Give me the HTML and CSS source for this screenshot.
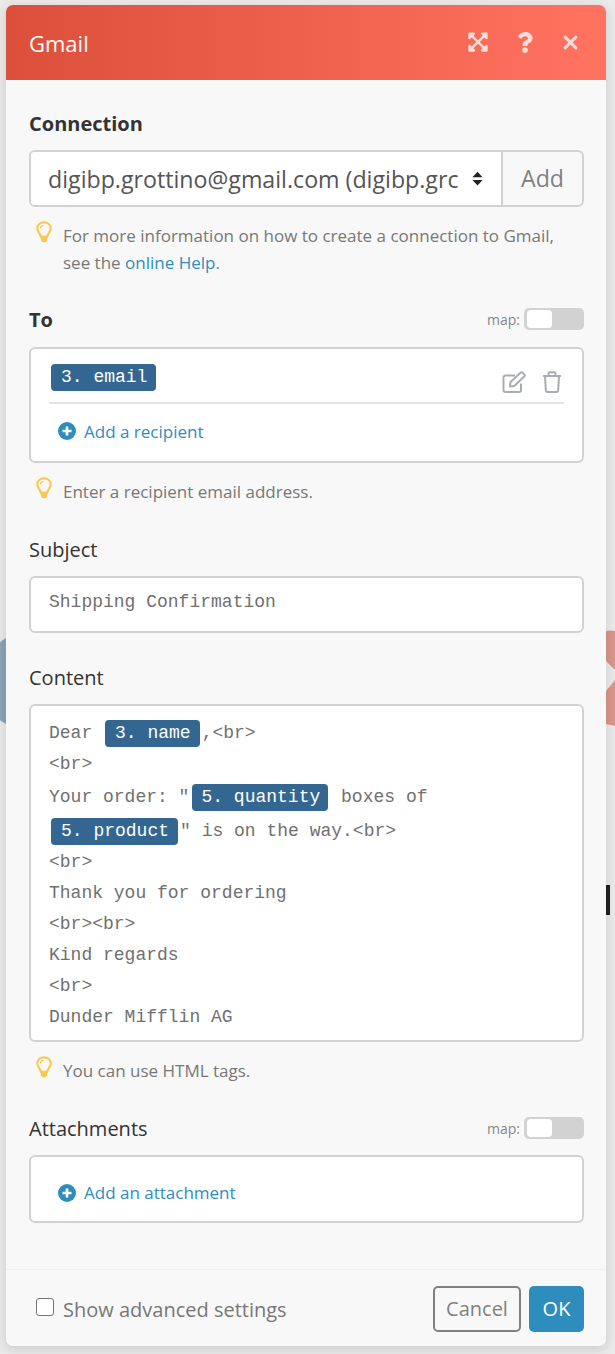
FILE: index.html
```html
<!DOCTYPE html>
<html lang="en">
<head>
    <meta charset="UTF-8">
    <meta name="viewport" content="width=device-width, initial-scale=1.0">
    <title>Gmail</title>
    <link rel="stylesheet" href="styles.css">
</head>
<body>
    <svg class="bg-shape bg-left" viewBox="0 0 6 90"><path d="M0 4 L6 0 V88 L0 84 Z"/></svg>
    <svg class="bg-shape bg-right" viewBox="0 0 9 96"><path d="M0 1 Q5 0 9 1 V40 L0 31 V61 L9 50 V96 Q5 95 0 94 Z"/></svg>
    <div class="bg-bar"></div>

    <div class="modal">
        <div class="modal-header">
            <span class="modal-title">Gmail</span>
            <div class="header-icons">
                <svg class="icon-expand" viewBox="0 0 448 512"><path d="M448.1 344v112c0 13.3-10.7 24-24 24h-112c-21.4 0-32.1-25.9-17-41l36.2-36.2L224 295.6 116.8 402.9 153 439c15.1 15.1 4.4 41-17 41H24c-13.3 0-24-10.7-24-24V344c0-21.4 25.9-32.1 41-17l36.2 36.2L184.5 256 77.2 148.7 41 185c-15.1 15.1-41 4.4-41-17V56c0-13.3 10.7-24 24-24h112c21.4 0 32.1 25.9 17 41l-36.2 36.2L224 216.4l107.3-107.3L295.1 73c-15.1-15.1-4.4-41 17-41h112c13.3 0 24 10.7 24 24v112c0 21.4-25.9 32.1-41 17l-36.2-36.2L263.6 256l107.3 107.3 36.2-36.2c15.1-15.2 41-4.5 41 16.9z"/></svg>
                <svg class="icon-question" viewBox="0 0 384 512"><path d="M202.021 0C122.202 0 70.503 32.703 29.914 91.026c-7.363 10.58-5.093 25.086 5.178 32.874l43.138 32.709c10.373 7.865 25.132 6.026 33.253-4.148 25.049-31.381 43.63-49.449 82.757-49.449 30.764 0 68.816 19.799 68.816 49.631 0 22.552-18.617 34.134-48.993 51.164-35.423 19.86-82.299 44.576-82.299 106.405V320c0 13.255 10.745 24 24 24h72.471c13.255 0 24-10.745 24-24v-5.773c0-42.86 125.268-44.645 125.268-160.627C377.504 66.256 286.902 0 202.021 0zM192 373.459c-38.196 0-69.271 31.075-69.271 69.271 0 38.195 31.075 69.27 69.271 69.27s69.271-31.075 69.271-69.271-31.075-69.27-69.271-69.27z"/></svg>
                <svg class="icon-close" viewBox="0 0 14 14"><path d="M2 2 L12 12 M12 2 L2 12"/></svg>
            </div>
        </div>

        <div class="modal-body">
            <div class="field field-connection">
                <div class="field-label bold">Connection</div>
                <div class="select-group">
                    <div class="select-box">
                        <span class="select-text">digibp.grottino@gmail.com (digibp.grc</span>
                        <svg class="icon-sort" viewBox="0 0 12 16"><path d="M6 0.5 L11.5 6.5 H0.5 Z M0.5 9.5 H11.5 L6 15.5 Z"/></svg>
                    </div>
                    <div class="select-add">Add</div>
                </div>
                <div class="hint">
                    <svg class="icon-bulb" viewBox="0 0 18 24"><path class="bulb-glass" d="M5.5 17.5 C5 13.5 1.5 12 1.5 8 C1.5 4 4.8 1.2 9 1.2 C13.2 1.2 16.5 4 16.5 8 C16.5 12 13 13.5 12.5 17.5 Z"/><path class="bulb-shine" d="M5 8 C5 6 6.5 4.6 8.5 4.4"/><path class="bulb-base" d="M5.6 18.6 H12.4 V20.6 C12.4 22.4 10.8 23.6 9 23.6 C7.2 23.6 5.6 22.4 5.6 20.6 Z"/></svg>
                    <div class="hint-text">
                        <p>For more information on how to create a connection to Gmail,</p>
                        <p>see the <a href="#">online Help</a>.</p>
                    </div>
                </div>
            </div>

            <div class="field field-to">
                <div class="label-row">
                    <div class="field-label bold">To</div>
                    <div class="map-toggle"><span>map:</span><div class="toggle"><div class="toggle-knob"></div></div></div>
                </div>
                <div class="box box-to">
                    <div class="recipient">
                        <span class="pill">3. email</span>
                        <div class="recipient-icons">
                            <svg class="icon-edit" viewBox="0 0 24 22"><path d="M19 12.5 V19 C19 20.2 18.2 21 17 21 H3.5 C2.3 21 1.5 20.2 1.5 19 V6.5 C1.5 5.3 2.3 4.5 3.5 4.5 H13"/><path d="M8.5 11 L18.5 1.8 C19.2 1.2 20 1.2 20.6 1.7 L22.3 3.4 C22.9 4 22.9 4.8 22.2 5.5 L12.2 15 L8 15.6 Z"/></svg>
                            <svg class="icon-trash" viewBox="0 0 20 22"><path d="M1 5 H19 M6.5 5 V2.8 C6.5 1.8 7.2 1.2 8 1.2 H12 C12.8 1.2 13.5 1.8 13.5 2.8 V5 M3 5 L3.8 19 C3.9 20.2 4.7 21 5.8 21 H14.2 C15.3 21 16.1 20.2 16.2 19 L17 5"/></svg>
                        </div>
                    </div>
                    <a class="add-link add-recipient" href="#">
                        <svg class="icon-plus" viewBox="0 0 18 18"><circle cx="9" cy="9" r="9"/><path d="M9 4.5 V13.5 M4.5 9 H13.5"/></svg>
                        Add a recipient
                    </a>
                </div>
                <div class="hint">
                    <svg class="icon-bulb" viewBox="0 0 18 24"><path class="bulb-glass" d="M5.5 17.5 C5 13.5 1.5 12 1.5 8 C1.5 4 4.8 1.2 9 1.2 C13.2 1.2 16.5 4 16.5 8 C16.5 12 13 13.5 12.5 17.5 Z"/><path class="bulb-shine" d="M5 8 C5 6 6.5 4.6 8.5 4.4"/><path class="bulb-base" d="M5.6 18.6 H12.4 V20.6 C12.4 22.4 10.8 23.6 9 23.6 C7.2 23.6 5.6 22.4 5.6 20.6 Z"/></svg>
                    <div class="hint-text"><p>Enter a recipient email address.</p></div>
                </div>
            </div>

            <div class="field field-subject">
                <div class="field-label">Subject</div>
                <div class="box box-subject mono">Shipping Confirmation</div>
            </div>

            <div class="field field-content">
                <div class="field-label">Content</div>
                <div class="box box-content mono">
                    <div class="line">Dear <span class="pill">3. name</span>,&lt;br&gt;</div>
                    <div class="line">&lt;br&gt;</div>
                    <div class="line line-third">Your order: "<span class="pill">5. quantity</span> boxes of</div>
                    <div class="line line-fourth"><span class="pill">5. product</span>" is on the way.&lt;br&gt;</div>
                    <div class="line">&lt;br&gt;</div>
                    <div class="line">Thank you for ordering</div>
                    <div class="line">&lt;br&gt;&lt;br&gt;</div>
                    <div class="line">Kind regards</div>
                    <div class="line">&lt;br&gt;</div>
                    <div class="line">Dunder Mifflin AG</div>
                </div>
                <div class="hint">
                    <svg class="icon-bulb" viewBox="0 0 18 24"><path class="bulb-glass" d="M5.5 17.5 C5 13.5 1.5 12 1.5 8 C1.5 4 4.8 1.2 9 1.2 C13.2 1.2 16.5 4 16.5 8 C16.5 12 13 13.5 12.5 17.5 Z"/><path class="bulb-shine" d="M5 8 C5 6 6.5 4.6 8.5 4.4"/><path class="bulb-base" d="M5.6 18.6 H12.4 V20.6 C12.4 22.4 10.8 23.6 9 23.6 C7.2 23.6 5.6 22.4 5.6 20.6 Z"/></svg>
                    <div class="hint-text"><p>You can use HTML tags.</p></div>
                </div>
            </div>

            <div class="field field-attachments">
                <div class="label-row">
                    <div class="field-label">Attachments</div>
                    <div class="map-toggle"><span>map:</span><div class="toggle"><div class="toggle-knob"></div></div></div>
                </div>
                <div class="box box-attachments">
                    <a class="add-link" href="#">
                        <svg class="icon-plus" viewBox="0 0 18 18"><circle cx="9" cy="9" r="9"/><path d="M9 4.5 V13.5 M4.5 9 H13.5"/></svg>
                        Add an attachment
                    </a>
                </div>
            </div>
        </div>

        <div class="modal-footer">
            <label class="advanced"><span class="checkbox"></span><span class="advanced-text">Show advanced settings</span></label>
            <div class="footer-buttons">
                <button class="btn btn-cancel" type="button">Cancel</button>
                <button class="btn btn-ok" type="button">OK</button>
            </div>
        </div>
    </div>
</body>
</html>
```

FILE: styles.css
```css
* {
    box-sizing: border-box;
}

html, body {
    height: 100%;
}

body {
    font-family: 'Open Sans', 'Noto Sans', sans-serif;
    margin: 0;
    padding: 5px 9px 8px 6px;
    background-color: #eaeaea;
    color: #333;
    overflow: hidden;
    position: relative;
}

.bg-shape {
    position: absolute;
}

.bg-left {
    left: 0;
    top: 638px;
    width: 6px;
    height: 88px;
    fill: #8aa3b8;
}

.bg-right {
    left: 606px;
    top: 630px;
    width: 9px;
    height: 96px;
    fill: #d9968c;
}

.bg-bar {
    position: absolute;
    left: 606px;
    top: 885px;
    width: 4px;
    height: 30px;
    background-color: #222;
}

.modal {
    position: relative;
    width: 600px;
    height: 1341px;
    display: flex;
    flex-direction: column;
    background-color: #f8f8f8;
    border-radius: 7px;
    box-shadow: 0 3px 12px rgba(0, 0, 0, 0.14);
}

.modal-header {
    height: 75px;
    flex: none;
    display: flex;
    align-items: center;
    justify-content: space-between;
    padding: 0 28px 0 23px;
    background: linear-gradient(to right, #dc4f3a, #ff7360);
    border-radius: 7px 7px 0 0;
}

.modal-title {
    font-size: 22px;
    color: #fff;
}

.header-icons {
    display: flex;
    align-items: center;
    margin-top: -1px;
}

.header-icons svg {
    fill: #ffdcd6;
}

.icon-expand {
    width: 20px;
    height: 22px;
    margin-right: 29px;
}

.icon-question {
    width: 16px;
    height: 21px;
    margin-right: 30px;
}

.icon-close {
    width: 15px;
    height: 15px;
    fill: none !important;
    stroke: #ffdcd6;
    stroke-width: 2.8;
    stroke-linecap: round;
}

.modal-body {
    flex: 1;
    padding: 0 22px 0 23px;
}

.field-label {
    font-size: 20px;
    line-height: 28px;
    color: #333;
}

.bold {
    font-weight: 700;
}

.field-connection {
    padding-top: 30px;
}

.select-group {
    display: flex;
    height: 57px;
    margin-top: 12px;
    border: 2px solid #d2d2d2;
    border-radius: 6px;
    overflow: hidden;
}

.select-box {
    width: 472px;
    display: flex;
    align-items: center;
    padding: 0 18px 0 17px;
    background-color: #fff;
    border-right: 2px solid #d2d2d2;
}

.select-text {
    flex: 1;
    font-size: 23.2px;
    color: #555;
    white-space: nowrap;
    overflow: hidden;
}

.icon-sort {
    flex: none;
    width: 11px;
    height: 15px;
    margin-left: 12px;
    fill: #222;
}

.select-add {
    flex: 1;
    text-align: center;
    font-size: 23.2px;
    line-height: 53px;
    color: #808080;
}

.hint {
    display: flex;
    margin-top: 14px;
    padding-left: 7px;
    font-size: 17px;
    line-height: 27px;
    color: #777;
}

.hint-text {
    padding-top: 1px;
}

.hint p {
    margin: 0;
}

.hint a {
    color: #2f8dbd;
    text-decoration: none;
}

.icon-bulb {
    flex: none;
    width: 16px;
    height: 22px;
    margin-right: 11px;
}

.bulb-glass {
    fill: none;
    stroke: #fbc74e;
    stroke-width: 2.4;
}

.bulb-shine {
    fill: none;
    stroke: #fbc74e;
    stroke-width: 1.2;
}

.bulb-base {
    fill: #fbc74e;
}

.label-row {
    display: flex;
    align-items: center;
    justify-content: space-between;
    height: 28px;
}

.label-row .field-label {
    padding-top: 2px;
    line-height: 26px;
}

.map-toggle {
    display: flex;
    align-items: center;
    font-size: 14px;
    color: #888;
}

.toggle {
    width: 60px;
    height: 22px;
    margin-left: 4px;
    padding: 2px 3px;
    background-color: #d2d2d2;
    border-radius: 5px;
}

.toggle-knob {
    width: 25px;
    height: 18px;
    background-color: #fff;
    border-radius: 4px;
}

.box {
    border: 2px solid #d2d2d2;
    border-radius: 6px;
    background-color: #fff;
}

.mono {
    font-family: 'Liberation Mono', monospace;
    font-size: 18px;
    color: #707070;
}

.pill {
    display: inline-block;
    height: 27px;
    margin: 0 2px;
    padding: 0 9px 0 10px;
    font-family: 'Liberation Mono', monospace;
    font-size: 18px;
    line-height: 26px;
    color: #fff;
    background-color: #336791;
    border-radius: 4px;
}

.field-to {
    padding-top: 29px;
}

.box-to {
    height: 116px;
    margin-top: 14px;
    padding: 15px 18px 0;
}

.recipient {
    display: flex;
    justify-content: space-between;
    height: 40px;
    border-bottom: 2px solid #e2e2e8;
}

.recipient .pill {
    margin: 0 0 0 2px;
}

.recipient-icons {
    display: flex;
    align-items: flex-end;
    padding: 0 2px 9px 0;
}

.icon-edit, .icon-trash {
    fill: none;
    stroke: #a9adb2;
    stroke-width: 2;
    stroke-linejoin: round;
}

.icon-edit {
    width: 24px;
    height: 22px;
    margin-right: 16px;
}

.icon-trash {
    width: 20px;
    height: 22px;
}

.add-link {
    display: flex;
    align-items: center;
    font-size: 17px;
    color: #2f8dbd;
    text-decoration: none;
}

.add-recipient {
    height: 54px;
    padding-left: 9px;
}

.icon-plus {
    width: 18px;
    height: 18px;
    margin-right: 8px;
    fill: #2f8dbd;
    stroke: #fff;
    stroke-width: 2.6;
}

.icon-plus circle {
    stroke: none;
}

.field-subject {
    padding-top: 31px;
}

.box-subject {
    height: 57px;
    margin-top: 12px;
    padding: 14px 18px 0;
}

.field-content {
    padding-top: 31px;
}

.box-content {
    height: 338px;
    margin-top: 12px;
    padding: 12px 18px 0;
}

.line {
    height: 31px;
    line-height: 31px;
    white-space: pre;
}

.line-third {
    margin-top: 2px;
}

.line-fourth {
    margin-top: 3px;
}

.line-third .pill {
    margin-left: 3px;
    padding: 0 8px 0 9px;
}

.field-attachments {
    padding-top: 30px;
}

.box-attachments {
    height: 68px;
    margin-top: 13px;
    padding: 24px 0 0 27px;
}

.modal-footer {
    height: 77px;
    flex: none;
    display: flex;
    align-items: center;
    justify-content: space-between;
    padding: 1px 22px 0 30px;
    border-top: 1px solid #f0f0f0;
}

.advanced {
    display: flex;
    align-items: center;
    margin-bottom: 4px;
    font-size: 20px;
    color: #777;
}

.advanced-text {
    padding-top: 5px;
}

.checkbox {
    width: 18px;
    height: 18px;
    margin-right: 9px;
    background-color: #fff;
    border: 1px solid #767676;
    border-radius: 3px;
}

.footer-buttons {
    display: flex;
    gap: 8px;
}

.btn {
    height: 46px;
    padding: 0;
    font-family: inherit;
    font-size: 20px;
    border-radius: 5px;
    cursor: pointer;
}

.btn-cancel {
    width: 88px;
    color: #808080;
    background-color: #f8f8f8;
    border: 2px solid #808080;
}

.btn-ok {
    width: 55px;
    color: #fff;
    background-color: #2f8dbd;
    border: none;
}
```
